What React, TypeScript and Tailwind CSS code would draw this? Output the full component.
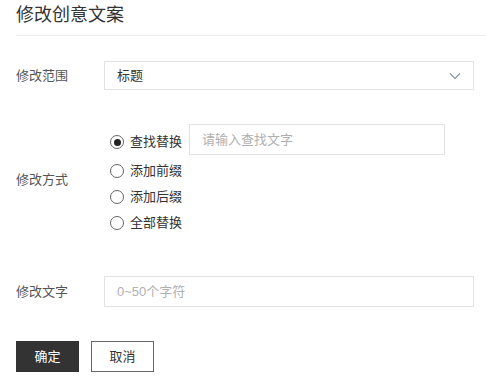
import { useState } from 'react';

const modes = ['查找替换', '添加前缀', '添加后缀', '全部替换'];

export default function App() {
    const [mode, setMode] = useState(0);

    return (
        <div className="w-[486px] h-[382px] bg-white text-[13px] text-[#333] font-['Liberation_Sans','Noto_Sans_CJK_SC',sans-serif] pl-4">
            {/* ── Header ── */}
            <div className="h-[36px] border-b border-[#f0f0f0] pt-[3px] text-[18px] leading-[24px] text-[#333]">
                修改创意文案
            </div>

            {/* ── Range ── */}
            <div className="flex items-center mt-[25px]">
                <div className="w-[88px] text-[#555]">修改范围</div>
                <div className="w-[370px] h-[29px] border border-[#e3e3e3] flex items-center justify-between pl-3 pr-3">
                    <span>标题</span>
                    <svg width="12" height="8" viewBox="0 0 12 8" fill="none" stroke="#8a95a8" strokeWidth="1.2">
                        <path d="M1 1.5l5 5 5-5" />
                    </svg>
                </div>
            </div>

            {/* ── Mode ── */}
            <div className="flex items-center mt-[34px]">
                <div className="w-[94px] text-[#555]">修改方式</div>
                <div className="flex flex-col">
                    {modes.map((m, i) => (
                        <div key={m} className={`flex items-center ${i === 0 ? 'h-[31px] mb-[3px]' : 'h-[26px]'}`}>
                            <label className={`flex items-center gap-[6px] cursor-pointer ${i === 0 ? 'mt-[5px]' : ''}`} onClick={() => setMode(i)}>
                                <span className="w-[14px] h-[14px] rounded-full border border-[#666] flex items-center justify-center">
                                    {mode === i && <span className="w-[7px] h-[7px] rounded-full bg-[#222]" />}
                                </span>
                                <span className="text-[#333]">{m}</span>
                            </label>
                            {i === 0 && (
                                <input
                                    placeholder="请输入查找文字"
                                    className="ml-[7px] w-[256px] h-[31px] border border-[#e3e3e3] px-3 outline-none placeholder-[#b0b0b0]"
                                />
                            )}
                        </div>
                    ))}
                </div>
            </div>

            {/* ── Text ── */}
            <div className="flex items-center mt-[40px]">
                <div className="w-[88px] text-[#555]">修改文字</div>
                <input
                    placeholder="0~50个字符"
                    className="w-[370px] h-[31px] border border-[#e3e3e3] px-3 outline-none placeholder-[#b0b0b0]"
                />
            </div>

            {/* ── Actions ── */}
            <div className="flex gap-3 mt-[34px]">
                <button className="w-[63px] h-[31px] bg-[#333] border border-[#333] text-white">确定</button>
                <button className="w-[63px] h-[31px] bg-white border border-[#666] text-[#333]">取消</button>
            </div>
        </div>
    );
}
